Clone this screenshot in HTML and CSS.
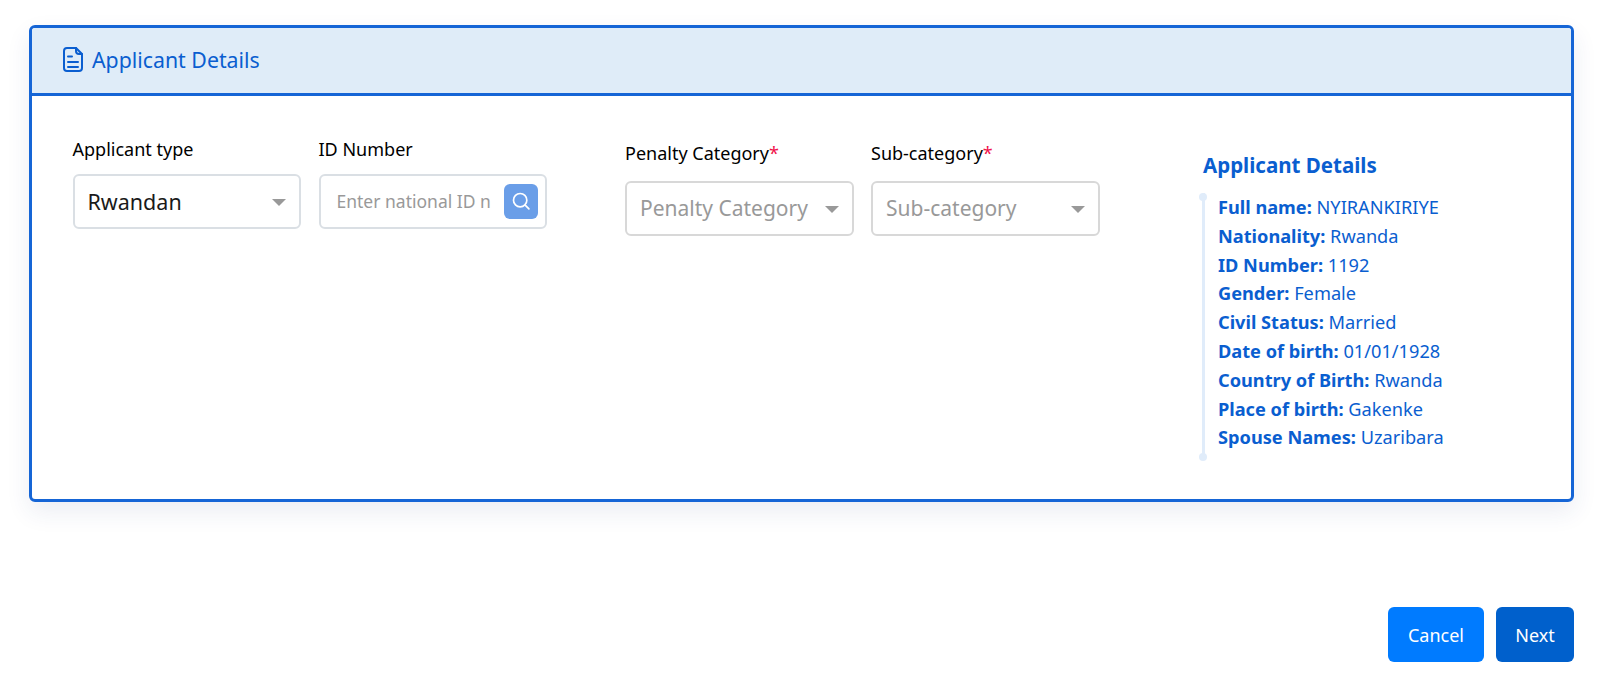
FILE: index.html
```html
<!DOCTYPE html>
<html lang="en">
<head>
  <meta charset="UTF-8">
  <meta name="viewport" content="width=device-width, initial-scale=1.0">
  <title>Applicant Details</title>
  <link rel="stylesheet" href="styles.css">
</head>
<body>

  <section class="card">
    <header class="card-header">
      <svg class="doc-icon" viewBox="0 0 20 25" fill="none" stroke="currentColor" stroke-width="2" stroke-linecap="round" stroke-linejoin="round">
        <path d="M13 1H4a3 3 0 0 0-3 3v17a3 3 0 0 0 3 3h12a3 3 0 0 0 3-3V7z"/>
        <path d="M13 1v3a3 3 0 0 0 3 3h3"/>
        <path d="M5 9.5h4M5 15h10M5 20h10"/>
      </svg>
      <h2>Applicant Details</h2>
    </header>

    <div class="card-body">
      <div class="field-group">
        <div class="field">
          <label for="applicantType">Applicant type</label>
          <div class="select-wrap">
            <select id="applicantType" class="control">
              <option>Rwandan</option>
            </select>
          </div>
        </div>
        <div class="field">
          <label for="idNumber">ID Number</label>
          <div class="control search-box">
            <input type="text" id="idNumber" placeholder="Enter national ID number">
            <button class="search-btn" type="button" aria-label="Search">
              <svg viewBox="0 0 24 24" fill="none" stroke="currentColor" stroke-width="2" stroke-linecap="round">
                <circle cx="11" cy="11" r="8"/>
                <path d="M17 17l4.5 4.5"/>
              </svg>
            </button>
          </div>
        </div>
      </div>

      <div class="field-group penalty-group">
        <div class="field">
          <label for="penaltyCategory">Penalty Category<span class="required">*</span></label>
          <div class="select-wrap">
            <select id="penaltyCategory" class="control empty">
              <option>Penalty Category</option>
            </select>
          </div>
        </div>
        <div class="field">
          <label for="subCategory">Sub-category<span class="required">*</span></label>
          <div class="select-wrap">
            <select id="subCategory" class="control empty">
              <option>Sub-category</option>
            </select>
          </div>
        </div>
      </div>

      <aside class="summary">
        <h3>Applicant Details</h3>
        <ul>
          <li><b>Full name:</b> NYIRANKIRIYE</li>
          <li><b>Nationality:</b> Rwanda</li>
          <li><b>ID Number:</b> 1192</li>
          <li><b>Gender:</b> Female</li>
          <li><b>Civil Status:</b> Married</li>
          <li><b>Date of birth:</b> 01/01/1928</li>
          <li><b>Country of Birth:</b> Rwanda</li>
          <li><b>Place of birth:</b> Gakenke</li>
          <li><b>Spouse Names:</b> Uzaribara</li>
        </ul>
      </aside>
    </div>
  </section>

  <div class="actions">
    <button class="btn btn-cancel" type="button">Cancel</button>
    <button class="btn btn-next" type="button">Next</button>
  </div>

</body>
</html>
```

FILE: styles.css
```css
body {
  margin: 0;
  padding: 25px 26px 0 29px;
  font-family: "Noto Sans", sans-serif;
  background-color: #fff;
  color: #000;
}
.card {
  height: 477px;
  box-sizing: border-box;
  border: 3px solid #1565d6;
  border-radius: 6px;
  box-shadow: 0 10px 24px rgba(30, 60, 120, 0.09);
}
.card-header {
  height: 68px;
  box-sizing: border-box;
  display: flex;
  align-items: center;
  padding: 0 0 3px 31px;
  gap: 9px;
  background-color: #dfecf8;
  border-bottom: 3px solid #1565d6;
  border-radius: 3px 3px 0 0;
  color: #0a5ed0;
}
.doc-icon {
  width: 20px;
  height: 25px;
}
.card-header h2 {
  margin: 0;
  font-size: 21.3px;
  font-weight: 400;
}
.card-body {
  display: flex;
  align-items: flex-start;
  padding: 0 0 0 40.5px;
}
.field-group {
  display: flex;
  gap: 17.5px;
  padding-top: 40.5px;
}
.penalty-group {
  margin-left: 78px;
  padding-top: 44.5px;
}
.field {
  width: 228.5px;
}
.field label {
  display: block;
  font-size: 18px;
  line-height: 24px;
  margin-bottom: 13px;
}
.penalty-group .field label {
  margin-bottom: 16px;
}
.required {
  color: #f0144b;
}
.select-wrap {
  position: relative;
}
.select-wrap::after {
  content: "";
  position: absolute;
  right: 15px;
  top: 25px;
  border-left: 7px solid transparent;
  border-right: 7px solid transparent;
  border-top: 7px solid #999;
}
.control {
  display: block;
  width: 100%;
  height: 55px;
  box-sizing: border-box;
  border: 2px solid #dadfe4;
  border-radius: 6px;
  background-color: #fff;
  font-family: inherit;
  font-size: 21.5px;
  color: #1a1a1a;
}
select.control {
  appearance: none;
  padding: 0 40px 0 13px;
}
select.empty {
  border-color: #d8d8d8;
  font-size: 21px;
  color: #999;
}
.search-box {
  display: flex;
  align-items: center;
  padding: 0 7px 0 16px;
  gap: 13px;
}
.search-box input {
  flex: 1;
  min-width: 0;
  padding: 0;
  border: none;
  outline: none;
  font-family: inherit;
  font-size: 17.5px;
}
.search-box input::placeholder {
  color: #999;
}
.search-btn {
  flex: none;
  width: 34px;
  height: 35px;
  padding: 7px;
  border: none;
  border-radius: 6px;
  background-color: #6a9ee8;
  color: #fff;
}
.search-btn svg {
  display: block;
  width: 20px;
  height: 20px;
}
.summary {
  margin-left: 103.5px;
  padding-top: 56px;
  color: #0a5ed0;
}
.summary h3 {
  margin: 0 0 15px;
  font-size: 20.5px;
  line-height: 26px;
  font-weight: 700;
}
.summary ul {
  position: relative;
  margin: 0;
  padding: 0 0 6px 15px;
  list-style: none;
  font-size: 18.2px;
  line-height: 28.8px;
  white-space: nowrap;
}
.summary ul::before {
  content: "";
  position: absolute;
  left: -1px;
  top: 0;
  bottom: 0;
  width: 3px;
  background-color: #e0ecfa;
}
.summary ul::after {
  content: "";
  position: absolute;
  left: -4px;
  bottom: -3px;
  width: 8px;
  height: 8px;
  border-radius: 50%;
  background-color: #e0ecfa;
}
.summary li:first-child::before {
  content: "";
  position: absolute;
  left: -4px;
  top: 0;
  width: 8px;
  height: 8px;
  border-radius: 50%;
  background-color: #e0ecfa;
}
.actions {
  display: flex;
  justify-content: flex-end;
  gap: 12px;
  margin-top: 105px;
}
.btn {
  height: 55px;
  padding: 0;
  border: none;
  border-radius: 6px;
  color: #fff;
  font-family: inherit;
  font-size: 18px;
}
.btn-cancel {
  width: 96px;
  background-color: #007bff;
}
.btn-next {
  width: 78px;
  background-color: #0060cc;
}
```
